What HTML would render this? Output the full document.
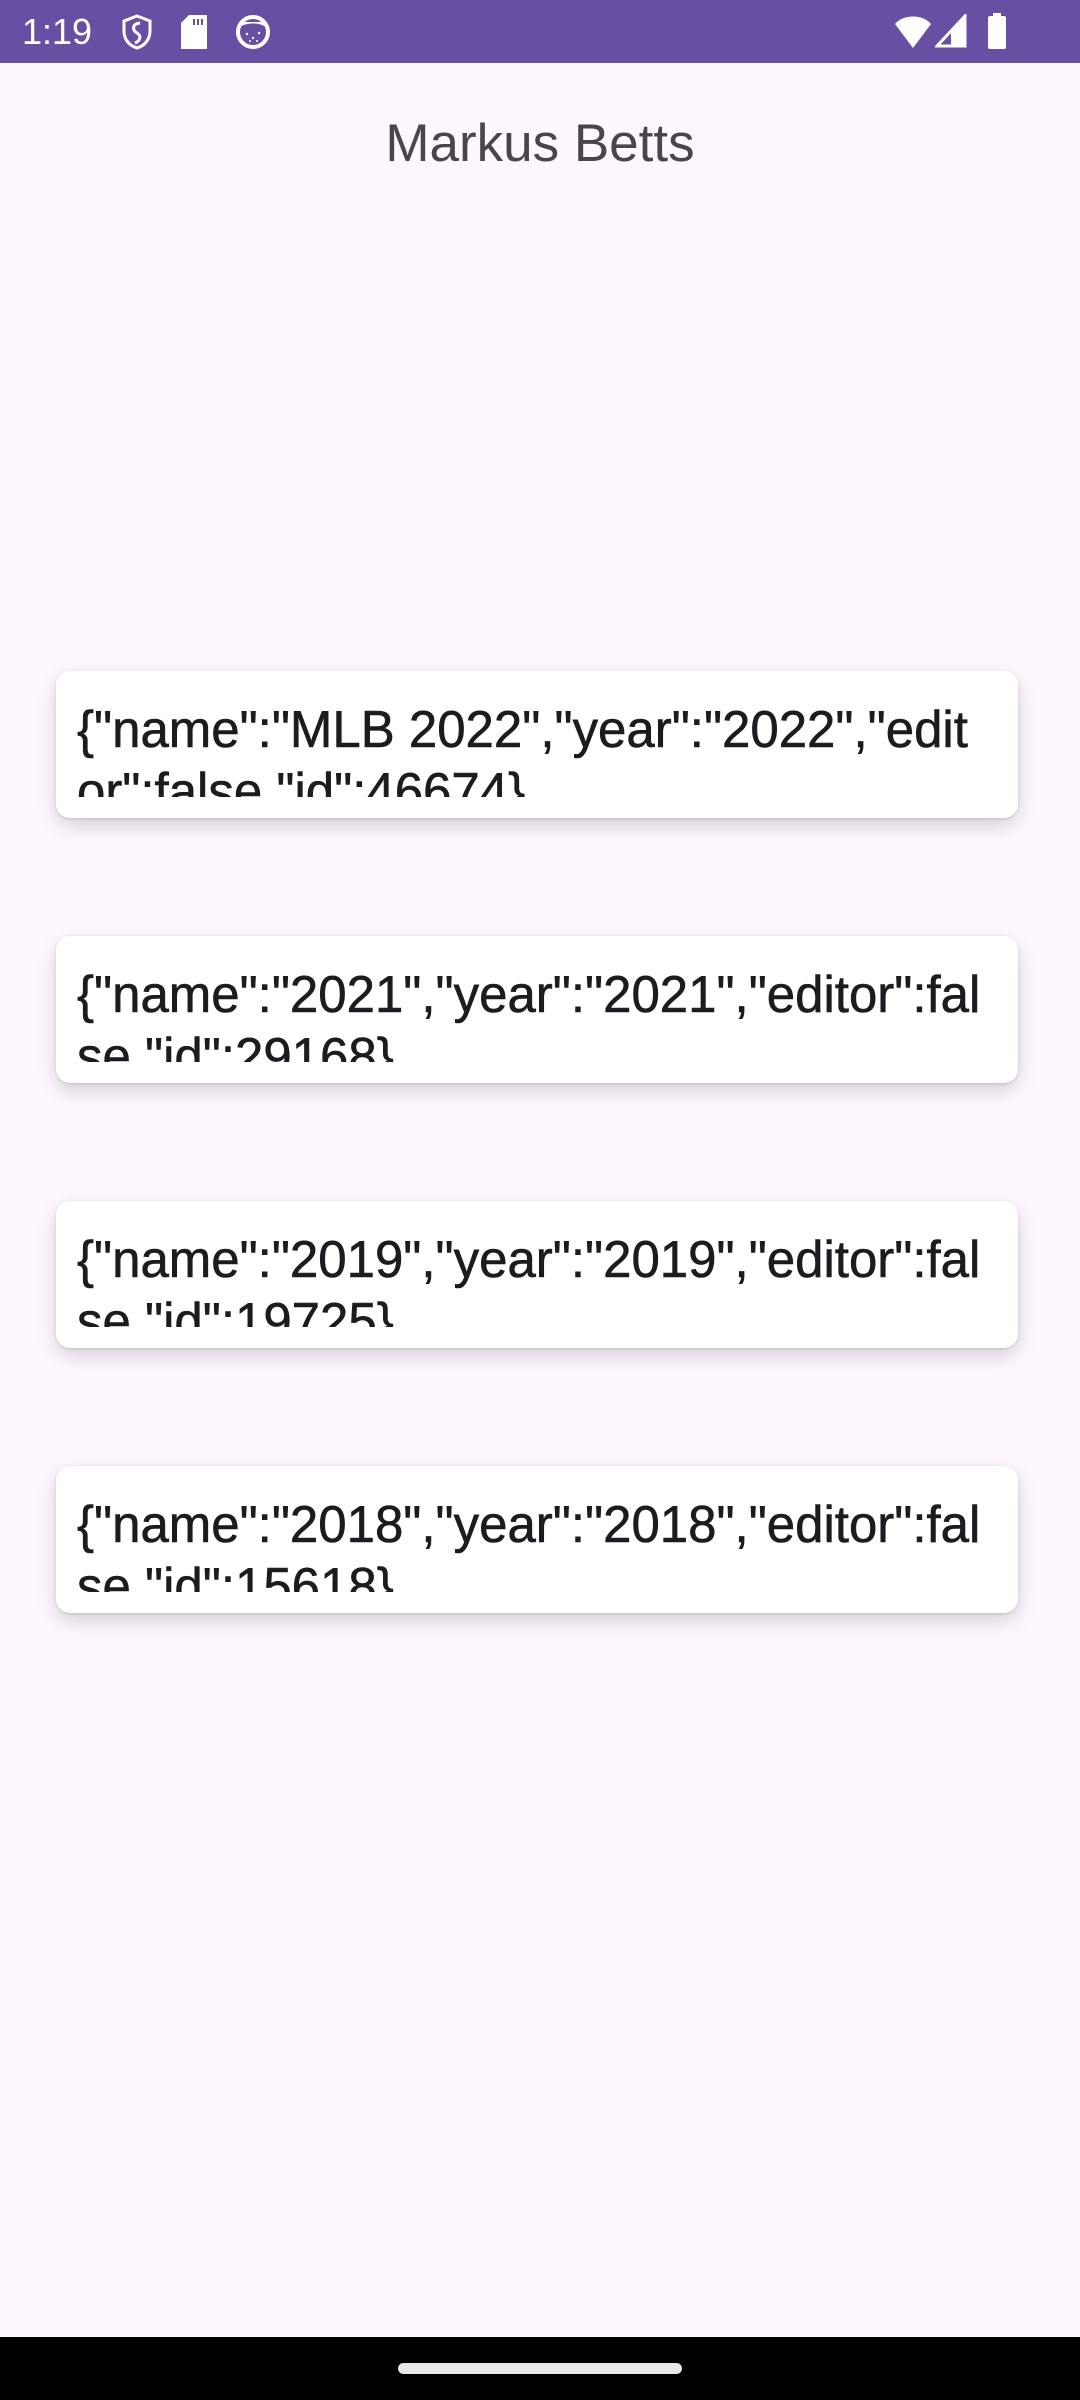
<!DOCTYPE html>
<html><head><meta charset="utf-8"><style>
html,body{margin:0;padding:0;width:1080px;height:2400px;overflow:hidden;background:#FEF7FF;font-family:"Liberation Sans",sans-serif;}
.sb{position:absolute;left:0;top:0;width:1080px;height:63px;background:#6750A4;color:#fff;}
.time{position:absolute;left:22px;top:11px;font-size:36px;}
.title{position:absolute;left:0;width:1080px;top:113px;text-align:center;font-size:53px;color:#49454F;font-weight:300;}
.card{position:absolute;left:56px;width:962px;height:147px;background:#fff;border-radius:14px;box-shadow:0 8px 20px rgba(0,0,0,0.16),0 1px 3px rgba(0,0,0,0.12);}
.txt{position:absolute;left:21px;top:21px;width:930px;height:105px;overflow:hidden;font-size:52px;line-height:62px;color:#1D1B20;white-space:nowrap;}
.txt span{display:block;transform:translateY(7px) scaleX(0.98);transform-origin:left;-webkit-text-stroke:0.6px #1D1B20;}
.nav{position:absolute;left:0;top:2337px;width:1080px;height:63px;background:#000;}
.handle{position:absolute;left:398px;top:26px;width:284px;height:11px;border-radius:6px;background:#e8e8e8;}
</style></head><body>
<div class="sb">
<div class="time">1:19</div>
<svg style="position:absolute;left:120px;top:14px" width="34" height="36" viewBox="0 0 34 36"><path d="M17 2 L30 7 V17 C30 26 24 32 17 34 C10 32 4 26 4 17 V7 Z" fill="none" stroke="#fff" stroke-width="3"/><path d="M20 9 C12 10 12 16 17 19 C22 22 20 27 15 29" fill="none" stroke="#fff" stroke-width="3"/></svg>
<svg style="position:absolute;left:181px;top:15px" width="26" height="34" viewBox="0 0 26 34"><path d="M8 0 H26 V34 H0 V8 Z" fill="#fff"/><rect x="12" y="4" width="2" height="6" fill="#6750A4"/><rect x="16" y="4" width="2" height="6" fill="#6750A4"/><rect x="20" y="4" width="2" height="6" fill="#6750A4"/></svg>
<svg style="position:absolute;left:235px;top:14px" width="36" height="36" viewBox="0 0 36 36"><circle cx="18" cy="18" r="15" fill="#6750A4" stroke="#fff" stroke-width="4"/><path d="M4 14 C10 8 26 8 32 14 L32 8 L4 8Z" fill="#fff"/><circle cx="12" cy="20" r="1.2" fill="#fff"/><circle cx="18" cy="24" r="1.2" fill="#fff"/><circle cx="24" cy="19" r="1.2" fill="#fff"/><circle cx="15" cy="27" r="1" fill="#fff"/><circle cx="22" cy="27" r="1" fill="#fff"/></svg>
<svg style="position:absolute;left:893px;top:14px" width="40" height="36" viewBox="0 0 40 36"><path d="M2 10 C10 0 30 0 38 10 L20 34 Z" fill="#fff"/></svg>
<svg style="position:absolute;left:935px;top:14px" width="32" height="34" viewBox="0 0 32 34"><path d="M30 2 V32 H2 Z" fill="none" stroke="#fff" stroke-width="3"/><path d="M30 2 V32 H16 V16Z" fill="#fff"/></svg>
<svg style="position:absolute;left:987px;top:13px" width="20" height="36" viewBox="0 0 20 36"><rect x="6" y="0" width="8" height="4" fill="#fff"/><rect x="1" y="3" width="18" height="33" rx="2" fill="#fff"/></svg>
</div>
<div class="title">Markus Betts</div>
<div class="card" style="top:671px"><div class="txt"><span>{"name":"MLB 2022","year":"2022","edit</span><span>or":false,"id":46674}</span></div></div>
<div class="card" style="top:936px"><div class="txt"><span>{"name":"2021","year":"2021","editor":fal</span><span>se,"id":29168}</span></div></div>
<div class="card" style="top:1201px"><div class="txt"><span>{"name":"2019","year":"2019","editor":fal</span><span>se,"id":19725}</span></div></div>
<div class="card" style="top:1466px"><div class="txt"><span>{"name":"2018","year":"2018","editor":fal</span><span>se,"id":15618}</span></div></div>
<div class="nav"><div class="handle"></div></div>
</body></html>
